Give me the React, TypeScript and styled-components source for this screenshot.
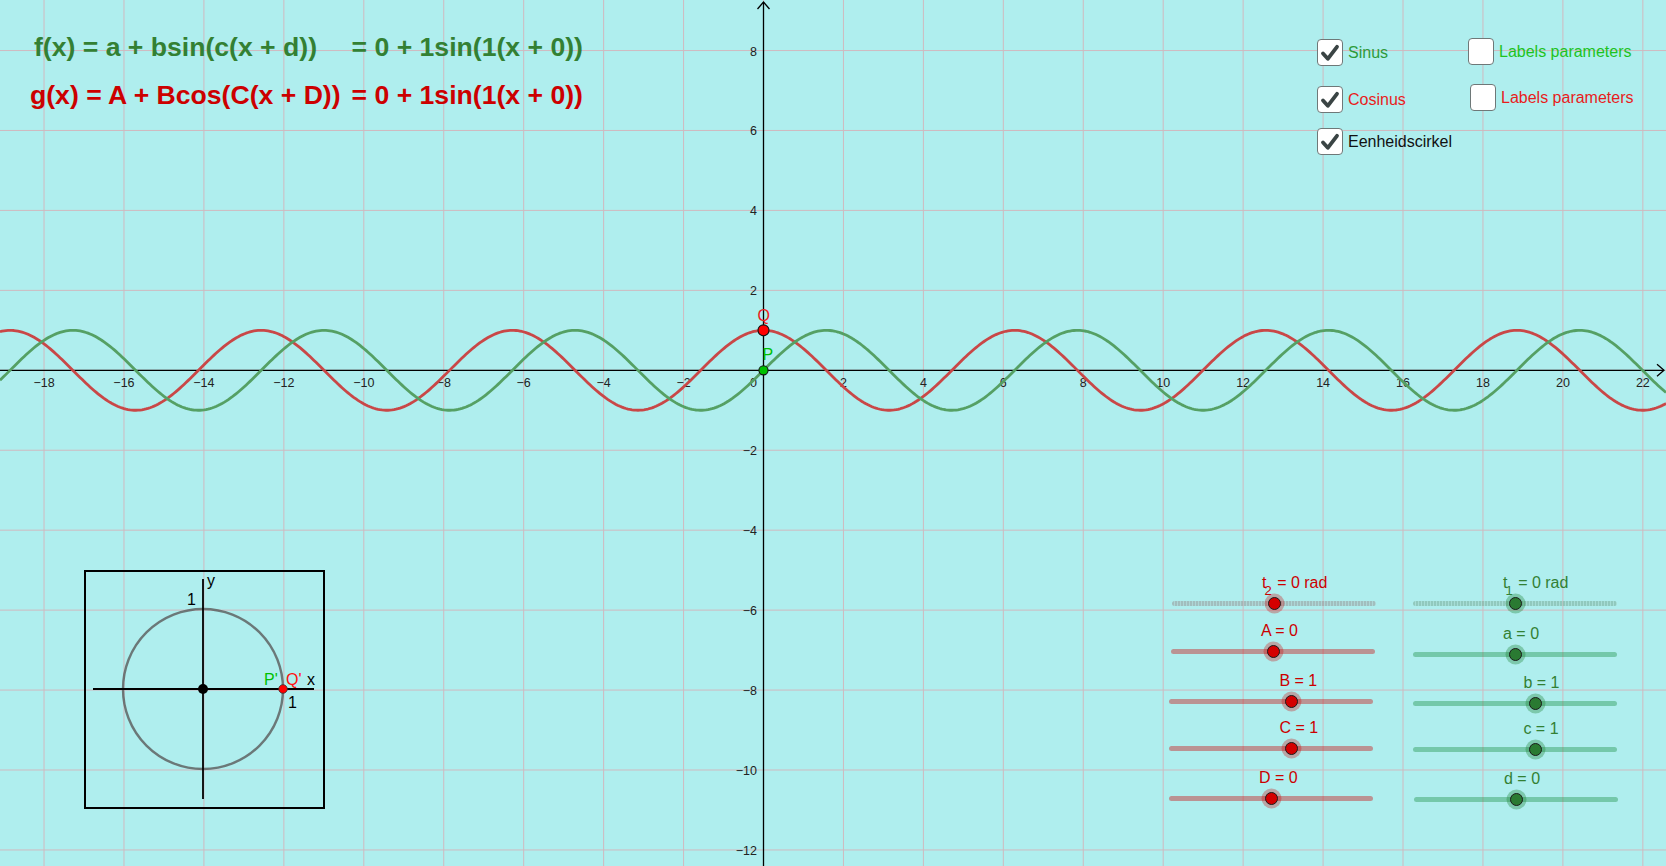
import React from "react";
import styled, { createGlobalStyle } from "styled-components";

const W = 1666;
const H = 866;
const OX = 763.5;
const OY = 370.3;
const U = 39.97;

const GREEN = "#338033";
const RED = "#cc0000";

const Global = createGlobalStyle`
  html, body { margin: 0; padding: 0; overflow: hidden; background: #afeeee; }
  body { font-family: "Liberation Sans", Arial, sans-serif; }
  * { box-sizing: border-box; }
`;

const Canvas = styled.div`
  position: relative;
  width: ${W}px;
  height: ${H}px;
  overflow: hidden;
  background: #afeeee;
  font-family: "Liberation Sans", Arial, sans-serif;
`;

const GraphSvg = styled.svg`
  position: absolute;
  left: 0;
  top: 0;
  display: block;
`;

const FormulaPanel = styled.div`
  position: absolute;
  left: 30px;
  top: 23px;
  display: grid;
  grid-template-columns: auto auto;
  column-gap: 11px;
  font-family: "Liberation Sans", Arial, sans-serif;
  font-weight: bold;
  font-size: 26.6px;
`;

const Formula = styled.div<{ $color: string; $indent?: number }>`
  color: ${(p) => p.$color};
  white-space: pre;
  line-height: 48px;
  height: 48px;
  padding-left: ${(p) => p.$indent ?? 0}px;
`;

const CheckPanel = styled.div`
  position: absolute;
  left: 1317px;
  top: 39px;
  display: grid;
  grid-template-columns: 151px auto;
  grid-template-rows: 47px 42px auto;
  align-items: start;
`;

const CheckItem = styled.div<{ $color: string; $dx?: number; $dy?: number }>`
  display: flex;
  align-items: center;
  gap: 5px;
  height: 27px;
  margin-left: ${(p) => p.$dx ?? 0}px;
  margin-top: ${(p) => p.$dy ?? 0}px;
  color: ${(p) => p.$color};
  font-size: 16px;
  white-space: nowrap;
`;

const Box = styled.span`
  display: flex;
  align-items: center;
  justify-content: center;
  width: 26px;
  height: 27px;
  border: 1.6px solid #6e7878;
  border-radius: 4px;
  background: #ffffff;
`;

const SliderPanel = styled.div`
  position: absolute;
  left: 1169px;
  top: 567px;
  display: grid;
  grid-template-columns: 205px 205px;
  column-gap: 39px;
`;

const SliderColumn = styled.div`
  display: flex;
  flex-direction: column;
`;

const SliderBox = styled.div<{ $mt: number; $dx: number }>`
  position: relative;
  width: 204px;
  height: 46px;
  margin-top: ${(p) => p.$mt}px;
  margin-left: ${(p) => p.$dx}px;
`;

const Track = styled.div<{ $kind: "red" | "green" | "redT" | "greenT" }>`
  position: absolute;
  left: 0;
  right: 0;
  top: 33.5px;
  height: 5px;
  border-radius: 3px;
  background: ${(p) =>
    p.$kind === "red"
      ? "rgba(204, 0, 0, 0.38)"
      : p.$kind === "green"
      ? "rgba(20, 140, 60, 0.38)"
      : p.$kind === "redT"
      ? "repeating-linear-gradient(90deg, rgba(150,150,150,0.55) 0 2px, rgba(170,170,170,0.35) 2px 3px)"
      : "repeating-linear-gradient(90deg, rgba(120,170,150,0.55) 0 2px, rgba(150,190,170,0.35) 2px 3px)"};
`;

const Thumb = styled.div<{ $fill: string; $halo: string }>`
  position: absolute;
  top: 36px;
  width: 13px;
  height: 13px;
  margin-left: -6.5px;
  margin-top: -6.5px;
  border-radius: 50%;
  background: ${(p) => p.$fill};
  border: 1.2px solid #1a1a1a;
  box-shadow: 0 0 0 3.5px ${(p) => p.$halo};
`;

const SliderLabel = styled.div<{ $color: string }>`
  position: absolute;
  top: 7px;
  white-space: nowrap;
  font-size: 16px;
  line-height: 18px;
  color: ${(p) => p.$color};
`;

const Sub = styled.span`
  font-size: 13px;
  position: relative;
  top: 7px;
  margin-left: -2px;
  margin-right: 1px;
`;

const CircleFrame = styled.div`
  position: absolute;
  left: 84px;
  top: 570px;
  width: 241px;
  height: 239px;
  border: 2.8px solid #000;
`;

const CircleSvg = styled.svg`
  display: block;
  overflow: visible;
`;

function curve(fn: (x: number) => number): string {
  let d = "";
  for (let px = 0; px <= W; px += 2) {
    const x = (px - OX) / U;
    const y = OY - fn(x) * U;
    d += (px === 0 ? "M" : "L") + px.toFixed(1) + " " + y.toFixed(2) + " ";
  }
  return d;
}

const fmt = (n: number) => (n < 0 ? "\u2212" + Math.abs(n) : String(n));

const Graph: React.FC = () => {
  const xs: number[] = [];
  for (let k = -18; k <= 22; k += 2) xs.push(k);
  const ys: number[] = [];
  for (let k = -12; k <= 8; k += 2) ys.push(k);
  return (
    <GraphSvg width={W} height={H} viewBox={`0 0 ${W} ${H}`}>
      {xs.map((k) => (
        <line key={"gx" + k} x1={OX + k * U} x2={OX + k * U} y1={0} y2={H} stroke="#d0b9bf" strokeWidth={1} />
      ))}
      {ys.map((k) => (
        <line key={"gy" + k} y1={OY - k * U} y2={OY - k * U} x1={0} x2={W} stroke="#d0b9bf" strokeWidth={1} />
      ))}
      <line x1={0} x2={W - 2} y1={OY} y2={OY} stroke="#000" strokeWidth={1.3} />
      <polyline points={`${W - 9},${OY - 6} ${W - 2},${OY} ${W - 9},${OY + 6}`} fill="none" stroke="#000" strokeWidth={1.3} />
      <line x1={OX} x2={OX} y1={2} y2={H} stroke="#000" strokeWidth={1.3} />
      <polyline points={`${OX - 6},9 ${OX},2 ${OX + 6},9`} fill="none" stroke="#000" strokeWidth={1.3} />
      <g fontFamily="Liberation Sans, Arial, sans-serif" fontSize={12.5} fill="#222">
        {xs
          .filter((k) => k !== 0)
          .map((k) => (
            <text key={"lx" + k} x={OX + k * U} y={387} textAnchor="middle">
              {fmt(k)}
            </text>
          ))}
        {ys
          .filter((k) => k !== 0)
          .map((k) => (
            <text key={"ly" + k} x={757} y={OY - k * U + 5} textAnchor="end">
              {fmt(k)}
            </text>
          ))}
        <text x={757} y={387} textAnchor="end">0</text>
      </g>
      <path d={curve(Math.cos)} fill="none" stroke="#c94747" strokeWidth={2.8} strokeLinejoin="round" />
      <path d={curve(Math.sin)} fill="none" stroke="#55a064" strokeWidth={2.8} strokeLinejoin="round" />
      <circle cx={OX} cy={OY - U} r={5.5} fill="#ff0000" stroke="#111" strokeWidth={1.1} />
      <circle cx={OX} cy={OY} r={4.6} fill="#00c000" stroke="#111" strokeWidth={1.1} />
      <g fontFamily="Liberation Sans, Arial, sans-serif" fontSize={16}>
        <text x={757.5} y={321} fill="#f02020">Q</text>
        <text x={762.5} y={360} fill="#00c000">P</text>
      </g>
    </GraphSvg>
  );
};

const Check: React.FC = () => (
  <svg width="20" height="20" viewBox="0 0 20 20">
    <path d="M3 10.5 L7.8 15.8 L17 3.8" fill="none" stroke="#3a4444" strokeWidth={3.8} strokeLinecap="round" strokeLinejoin="round" />
  </svg>
);

type SliderSpec = {
  name: string;
  sub?: string;
  unit?: string;
  value: number;
  mt: number;
  dx: number;
  kind: "red" | "green" | "redT" | "greenT";
};

const MIN = -5;
const MAX = 5;
const TRACK_W = 204;

const Slider: React.FC<{ s: SliderSpec }> = ({ s }) => {
  const isRed = s.kind === "red" || s.kind === "redT";
  const pos = ((s.value - MIN) / (MAX - MIN)) * TRACK_W;
  const color = isRed ? RED : GREEN;
  return (
    <SliderBox $mt={s.mt} $dx={s.dx}>
      <SliderLabel $color={color} style={{ left: pos - 12 }}>
        {s.name}
        {s.sub && <Sub>{s.sub}</Sub>} = {s.value}
        {s.unit ? " " + s.unit : ""}
      </SliderLabel>
      <Track $kind={s.kind} />
      <Thumb
        style={{ left: pos }}
        $fill={isRed ? "#d40000" : "#2a7a32"}
        $halo={isRed ? "rgba(204,0,0,0.3)" : "rgba(30,130,50,0.35)"}
      />
    </SliderBox>
  );
};

const leftSliders: SliderSpec[] = [
  { name: "t", sub: "2", unit: "rad", value: 0, mt: 0, dx: 3, kind: "redT" },
  { name: "A", value: 0, mt: 2, dx: 2, kind: "red" },
  { name: "B", value: 1, mt: 4, dx: 0, kind: "red" },
  { name: "C", value: 1, mt: 1, dx: 0, kind: "red" },
  { name: "D", value: 0, mt: 4, dx: 0, kind: "red" },
];

const rightSliders: SliderSpec[] = [
  { name: "t", sub: "1", unit: "rad", value: 0, mt: 0, dx: 0, kind: "greenT" },
  { name: "a", value: 0, mt: 5, dx: 0, kind: "green" },
  { name: "b", value: 1, mt: 3, dx: 0, kind: "green" },
  { name: "c", value: 1, mt: 0, dx: 0, kind: "green" },
  { name: "d", value: 0, mt: 4, dx: 1, kind: "green" },
];

const UnitCircle: React.FC = () => (
  <CircleFrame>
    <CircleSvg width={235} height={233} viewBox="0 0 235 233">
      <circle cx={117} cy={117} r={80} fill="none" stroke="rgba(90,90,90,0.8)" strokeWidth={2.4} />
      <line x1={7} x2={228} y1={117} y2={117} stroke="#000" strokeWidth={1.8} />
      <line x1={117} x2={117} y1={7} y2={227} stroke="#000" strokeWidth={1.8} />
      <circle cx={117} cy={117} r={5} fill="#000" />
      <circle cx={197} cy={117} r={4.3} fill="#ff0000" stroke="#333" strokeWidth={0.8} />
      <g fontFamily="Liberation Sans, Arial, sans-serif" fontSize={16}>
        <text x={121} y={14} fill="#000">y</text>
        <text x={101} y={33} fill="#000">1</text>
        <text x={221} y={113} fill="#000">x</text>
        <text x={178} y={113} fill="#00c000">P'</text>
        <text x={200} y={113} fill="#ff1010">Q'</text>
        <text x={202} y={136} fill="#000">1</text>
      </g>
    </CircleSvg>
  </CircleFrame>
);

export default function App() {
  return (
    <>
      <Global />
      <Canvas>
        <Graph />
        <FormulaPanel>
          <Formula $color={GREEN} $indent={4}>{"f(x) = a + bsin(c(x + d))"}</Formula>
          <Formula $color={GREEN}>{"= 0 + 1sin(1(x + 0))"}</Formula>
          <Formula $color={RED}>{"g(x) = A + Bcos(C(x + D))"}</Formula>
          <Formula $color={RED}>{"= 0 + 1sin(1(x + 0))"}</Formula>
        </FormulaPanel>
        <CheckPanel>
          <CheckItem $color="#2e9a3a">
            <Box><Check /></Box>
            Sinus
          </CheckItem>
          <CheckItem $color="#1ec21e" $dy={-1}>
            <Box />
            Labels parameters
          </CheckItem>
          <CheckItem $color="#e81c1c">
            <Box><Check /></Box>
            Cosinus
          </CheckItem>
          <CheckItem $color="#e81c1c" $dx={2} $dy={-2}>
            <Box />
            Labels parameters
          </CheckItem>
          <CheckItem $color="#111">
            <Box><Check /></Box>
            Eenheidscirkel
          </CheckItem>
        </CheckPanel>
        <SliderPanel>
          <SliderColumn>
            {leftSliders.map((s, i) => (
              <Slider key={"l" + i} s={s} />
            ))}
          </SliderColumn>
          <SliderColumn>
            {rightSliders.map((s, i) => (
              <Slider key={"r" + i} s={s} />
            ))}
          </SliderColumn>
        </SliderPanel>
        <UnitCircle />
      </Canvas>
    </>
  );
}
